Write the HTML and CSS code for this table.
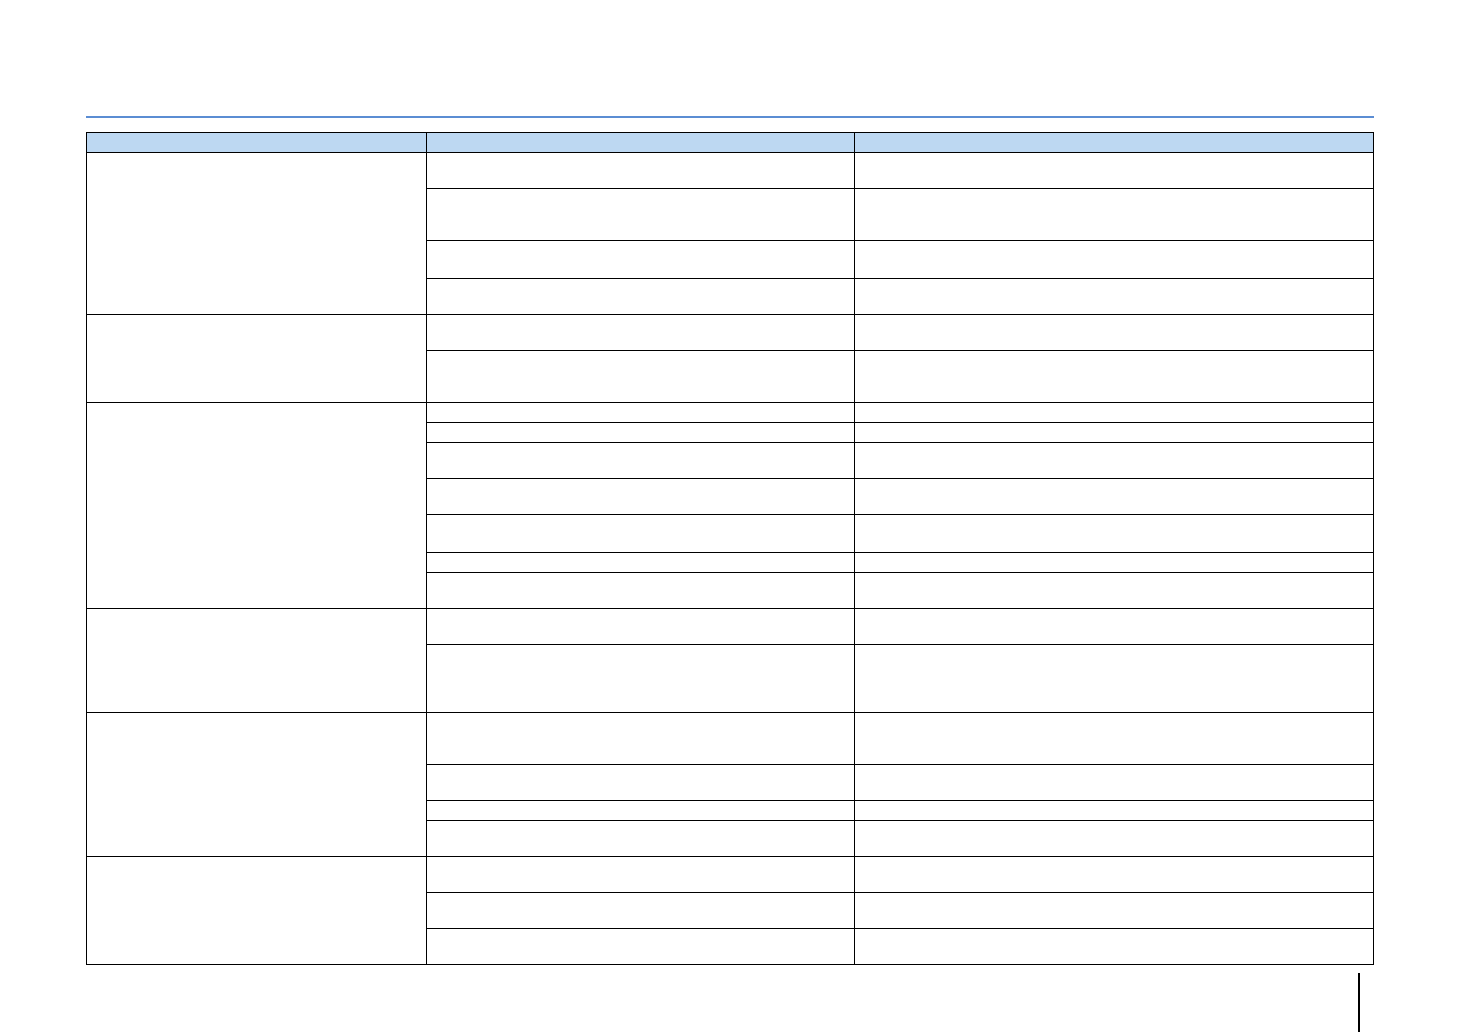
FILE: index.html
```
<!DOCTYPE html>
<html lang="en">
<head>
<meta charset="utf-8">
<title>Table</title>
<link rel="stylesheet" href="styles.css">
</head>
<body>
<div class="page">
  <div class="rule"></div>
  <div class="grid">
    <div class="cell head"></div>
    <div class="cell head"></div>
    <div class="cell head"></div>

    <div class="cell group s4"></div>
    <div class="cell"></div><div class="cell"></div>
    <div class="cell"></div><div class="cell"></div>
    <div class="cell"></div><div class="cell"></div>
    <div class="cell"></div><div class="cell"></div>

    <div class="cell group s2"></div>
    <div class="cell"></div><div class="cell"></div>
    <div class="cell"></div><div class="cell"></div>

    <div class="cell group s7"></div>
    <div class="cell"></div><div class="cell"></div>
    <div class="cell"></div><div class="cell"></div>
    <div class="cell"></div><div class="cell"></div>
    <div class="cell"></div><div class="cell"></div>
    <div class="cell"></div><div class="cell"></div>
    <div class="cell"></div><div class="cell"></div>
    <div class="cell"></div><div class="cell"></div>

    <div class="cell group s2"></div>
    <div class="cell"></div><div class="cell"></div>
    <div class="cell"></div><div class="cell"></div>

    <div class="cell group s4"></div>
    <div class="cell"></div><div class="cell"></div>
    <div class="cell"></div><div class="cell"></div>
    <div class="cell"></div><div class="cell"></div>
    <div class="cell"></div><div class="cell"></div>

    <div class="cell group s3"></div>
    <div class="cell"></div><div class="cell"></div>
    <div class="cell"></div><div class="cell"></div>
    <div class="cell"></div><div class="cell"></div>
  </div>
  <div class="marker"></div>
</div>
</body>
</html>
```

FILE: styles.css
```
html, body {
  margin: 0;
  padding: 0;
  background: #ffffff;
  font-family: "Liberation Sans", Arial, sans-serif;
}

.page {
  padding: 116px 0 0 86px;
  width: 1288px;
  height: 916px;
  overflow: hidden;
}

.rule {
  height: 2px;
  background: #5b8dd3;
  margin-bottom: 14px;
}

.grid {
  display: grid;
  width: 1288px;
  box-sizing: border-box;
  border-top: 1px solid #000;
  border-left: 1px solid #000;
  grid-template-columns: 340px 428px 519px;
  grid-template-rows:
    20px
    36px 52px 38px 36px
    36px 52px
    20px 20px 36px 36px 38px 20px 36px
    36px 68px
    52px 36px 20px 36px
    36px 36px 36px;
}

.cell {
  border-right: 1px solid #000;
  border-bottom: 1px solid #000;
  box-sizing: border-box;
  background: #ffffff;
}

.cell.head {
  background: #bdd8f2;
}

.s2 { grid-row: span 2; }
.s3 { grid-row: span 3; }
.s4 { grid-row: span 4; }
.s7 { grid-row: span 7; }

.marker {
  width: 2px;
  height: 70px;
  margin-top: 8px;
  margin-left: 1272px;
  background: #000;
}
```
